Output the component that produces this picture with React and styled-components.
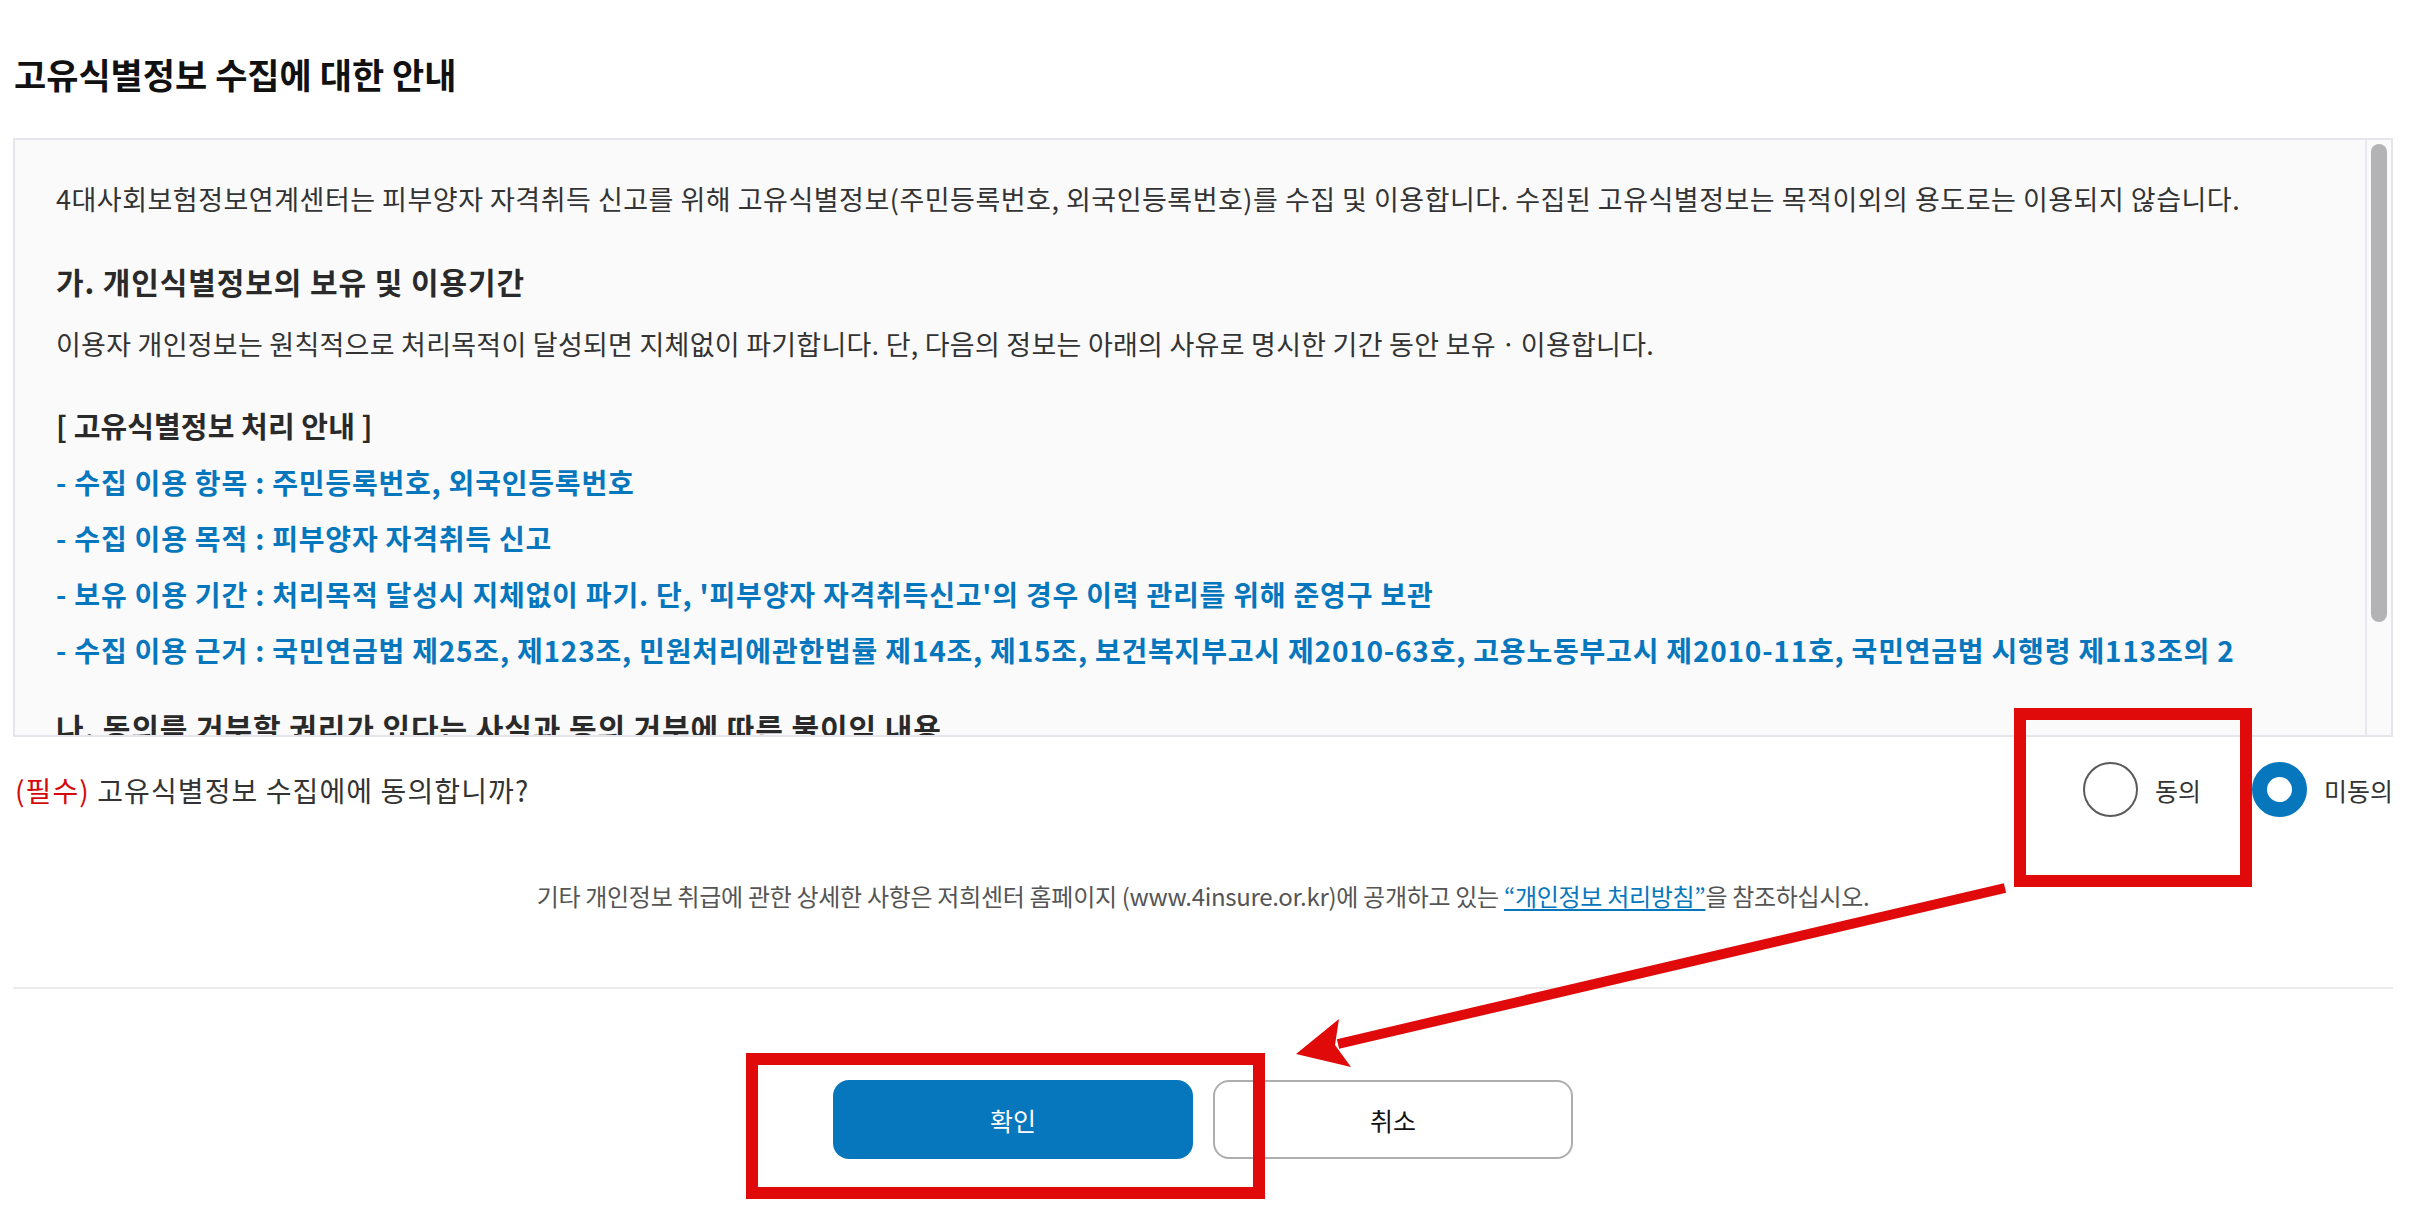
import styled, { createGlobalStyle } from 'styled-components'

const GlobalStyle = createGlobalStyle`
  html, body {
    margin: 0;
    padding: 0;
    background: #fff;
  }
  body {
    font-family: 'Noto Sans CJK KR', 'Noto Sans', sans-serif;
    color: #333;
  }
  * {
    box-sizing: border-box;
  }
`

const Page = styled.div`
  position: relative;
  width: 2432px;
  min-height: 1230px;
  padding: 52px 39px 0 13px;
`

const Title = styled.h2`
  margin: 0 0 0 1px;
  font-size: 35px;
  line-height: 44px;
  font-weight: 700;
  letter-spacing: 0;
  color: #111;
`

const TermsBox = styled.div`
  display: flex;
  margin-top: 42px;
  height: 599px;
  border: 2px solid #e5e5eb;
  background: #fafafa;
`

const TermsContent = styled.div`
  flex: 1;
  overflow: hidden;
  padding: 39px 40px 0 41px;
`

const ScrollTrack = styled.div`
  flex: none;
  width: 26px;
  padding: 4px 4px 0;
  border-left: 2px solid #e8e8ee;
  background: #fafafa;
`

const ScrollThumb = styled.div`
  width: 16px;
  height: 478px;
  border-radius: 8px;
  background: #b3b3b5;
`

const Paragraph = styled.p`
  margin: ${(p) => p.$top || 0}px 0 0;
  font-size: 27px;
  line-height: 40px;
  letter-spacing: ${(p) => p.$spacing ?? 0.5}px;
  color: #333;
`

const SectionHeading = styled.h3`
  margin: ${(p) => p.$top || 0}px 0 0;
  font-size: ${(p) => p.$size || 30}px;
  line-height: 42px;
  font-weight: 700;
  letter-spacing: ${(p) => p.$spacing ?? 0.9}px;
  color: #2a2a2a;
  white-space: nowrap;
`

const InfoList = styled.ul`
  list-style: none;
  margin: 8px 0 0;
  padding: 0;
`

const InfoItem = styled.li`
  font-size: 28px;
  line-height: 56px;
  font-weight: 700;
  letter-spacing: 0.8px;
  color: #0676bd;
`

const ConsentRow = styled.div`
  display: flex;
  align-items: center;
  justify-content: space-between;
  height: 55px;
  margin-top: 25px;
  padding-left: 2px;
`

const Question = styled.p`
  margin: 0;
  font-size: 28px;
  letter-spacing: 1.1px;
  color: #333;
`

const Required = styled.span`
  color: #d40a0a;
`

const RadioGroup = styled.div`
  display: flex;
  align-items: center;
  gap: 51px;
`

const RadioOption = styled.label`
  display: flex;
  align-items: center;
  gap: 17px;
  font-size: 25px;
  color: #333;
  cursor: pointer;
`

const RadioMark = styled.span`
  display: block;
  width: 55px;
  height: 55px;
  border-radius: 50%;
  background: #fff;
  border: ${(p) => (p.$checked ? '15px solid #0676bd' : '2px solid #5a5a5a')};
`

const Notice = styled.p`
  margin: 62px 0 0;
  text-align: center;
  font-size: 24px;
  line-height: 34px;
  letter-spacing: -0.3px;
  color: #555;
`

const PolicyLink = styled.a`
  color: #0676bd;
  text-decoration: underline;
  text-underline-offset: 3px;
`

const Divider = styled.hr`
  margin: 74px 0 0;
  border: 0;
  border-top: 2px solid #ebebeb;
`

const ButtonRow = styled.div`
  display: flex;
  justify-content: center;
  gap: 20px;
  margin-top: 91px;
`

const Button = styled.button`
  width: 360px;
  height: 79px;
  border-radius: 16px;
  font-family: inherit;
  font-size: 25px;
  cursor: pointer;
  background: ${(p) => (p.$primary ? '#0676bd' : '#fff')};
  color: ${(p) => (p.$primary ? '#fff' : '#111')};
  border: ${(p) => (p.$primary ? '0' : '2px solid #aeaeae')};
`

const Highlight = styled.div`
  position: absolute;
  border: 12px solid #e00a0a;
  pointer-events: none;
`

const ArrowLayer = styled.svg`
  position: absolute;
  left: 0;
  top: 0;
  pointer-events: none;
`

const listItems = [
  '- 수집 이용 항목 : 주민등록번호, 외국인등록번호',
  '- 수집 이용 목적 : 피부양자 자격취득 신고',
  "- 보유 이용 기간 : 처리목적 달성시 지체없이 파기. 단, '피부양자 자격취득신고'의 경우 이력 관리를 위해 준영구 보관",
  '- 수집 이용 근거 : 국민연금법 제25조, 제123조, 민원처리에관한법률 제14조, 제15조, 보건복지부고시 제2010-63호, 고용노동부고시 제2010-11호, 국민연금법 시행령 제113조의 2',
]

export default function App() {
  return (
    <>
      <GlobalStyle />
      <Page>
        <Title>고유식별정보 수집에 대한 안내</Title>

        <TermsBox>
          <TermsContent>
            <Paragraph>
              4대사회보험정보연계센터는 피부양자 자격취득 신고를 위해 고유식별정보(주민등록번호, 외국인등록번호)를 수집 및 이용합니다. 수집된 고유식별정보는 목적이외의 용도로는 이용되지 않습니다.
            </Paragraph>
            <SectionHeading $top={41}>가. 개인식별정보의 보유 및 이용기간</SectionHeading>
            <Paragraph $top={22} $spacing={0.25}>
              이용자 개인정보는 원칙적으로 처리목적이 달성되면 지체없이 파기합니다. 단, 다음의 정보는 아래의 사유로 명시한 기간 동안 보유ㆍ이용합니다.
            </Paragraph>
            <SectionHeading $top={40} $size={29} $spacing={0.1}>[ 고유식별정보 처리 안내 ]</SectionHeading>
            <InfoList>
              {listItems.map((item) => (
                <InfoItem key={item}>{item}</InfoItem>
              ))}
            </InfoList>
            <SectionHeading $top={28}>나. 동의를 거부할 권리가 있다는 사실과 동의 거부에 따른 불이익 내용</SectionHeading>
            <Paragraph $top={22}>
              이용자는 고유식별정보 수집에 대한 동의를 거부할 권리가 있으며, 동의를 거부할 경우 피부양자 자격취득 신고 서비스 이용이 제한될 수 있습니다.
            </Paragraph>
          </TermsContent>
          <ScrollTrack>
            <ScrollThumb />
          </ScrollTrack>
        </TermsBox>

        <ConsentRow>
          <Question>
            <Required>(필수)</Required> 고유식별정보 수집에에 동의합니까?
          </Question>
          <RadioGroup>
            <RadioOption>
              <RadioMark />
              동의
            </RadioOption>
            <RadioOption>
              <RadioMark $checked />
              미동의
            </RadioOption>
          </RadioGroup>
        </ConsentRow>

        <Notice>
          기타 개인정보 취급에 관한 상세한 사항은 저희센터 홈페이지 (www.4insure.or.kr)에 공개하고 있는{' '}
          <PolicyLink href="#">“개인정보 처리방침”</PolicyLink>을 참조하십시오.
        </Notice>

        <Divider />

        <ButtonRow>
          <Button $primary>확인</Button>
          <Button>취소</Button>
        </ButtonRow>

        <Highlight style={{ left: 2014, top: 708, width: 238, height: 179 }} />
        <Highlight style={{ left: 746, top: 1053, width: 519, height: 146 }} />
        <ArrowLayer width="2432" height="1230" viewBox="0 0 2432 1230">
          <line x1="2005" y1="888" x2="1338" y2="1044" stroke="#e00a0a" strokeWidth="10" />
          <polygon points="1296,1054 1339,1019 1335,1045 1351,1067" fill="#e00a0a" />
        </ArrowLayer>
      </Page>
    </>
  )
}
